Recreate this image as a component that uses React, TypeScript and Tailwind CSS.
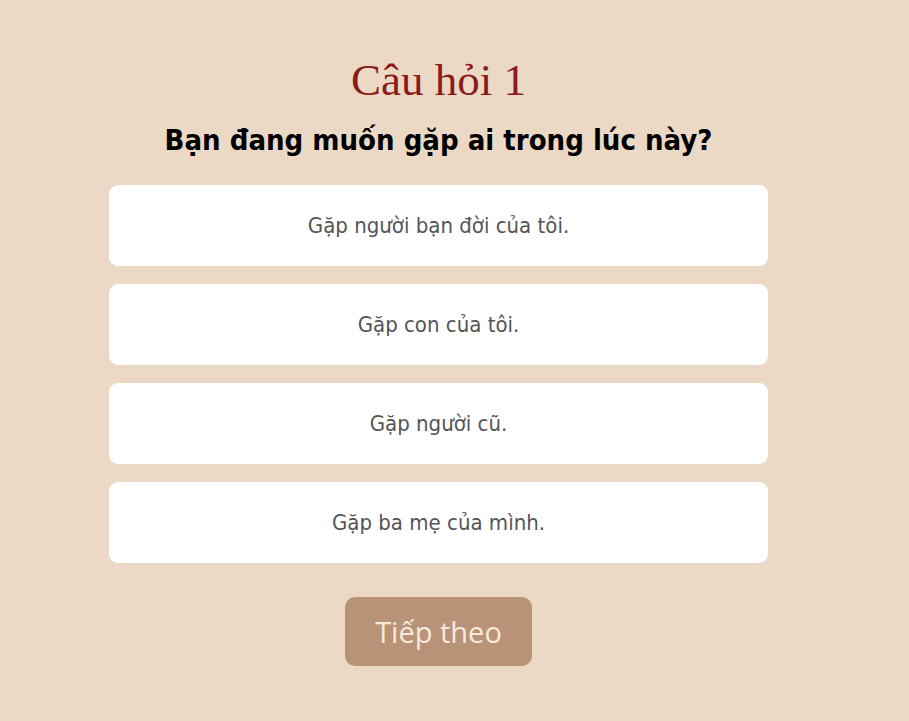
export default function App() {
  const options = [
    "Gặp người bạn đời của tôi.",
    "Gặp con của tôi.",
    "Gặp người cũ.",
    "Gặp ba mẹ của mình.",
  ];
  return (
    <div className="min-h-[721px] w-full bg-[#ebd9c5]">
      <div className="ml-[109px] flex w-[659px] flex-col items-center pt-[52px]">
        <h1 className="text-[45px] leading-[56px] text-[#8b1a1c] [font-family:'Liberation_Serif',serif]">
          Câu hỏi 1
        </h1>
        <h2 className="mt-[12px] text-[29px] font-bold leading-[40px] text-black [font-family:'DejaVu_Sans_Condensed','DejaVu_Sans',sans-serif]">
          Bạn đang muốn gặp ai trong lúc này?
        </h2>
        <div className="mt-[25px] flex w-full flex-col gap-[18px]">
          {options.map((o) => (
            <div
              key={o}
              className="flex h-[81px] items-center justify-center rounded-[9px] bg-white text-[22px] text-[#555558] [font-family:'DejaVu_Sans_Condensed','DejaVu_Sans',sans-serif]"
            >
              {o}
            </div>
          ))}
        </div>
        <button className="mt-[34px] h-[69px] w-[187px] rounded-[10px] bg-[#b89378] text-[29px] text-[#f7e9dc] [font-family:'Open_Sans',sans-serif]">
          Tiếp theo
        </button>
      </div>
    </div>
  );
}
